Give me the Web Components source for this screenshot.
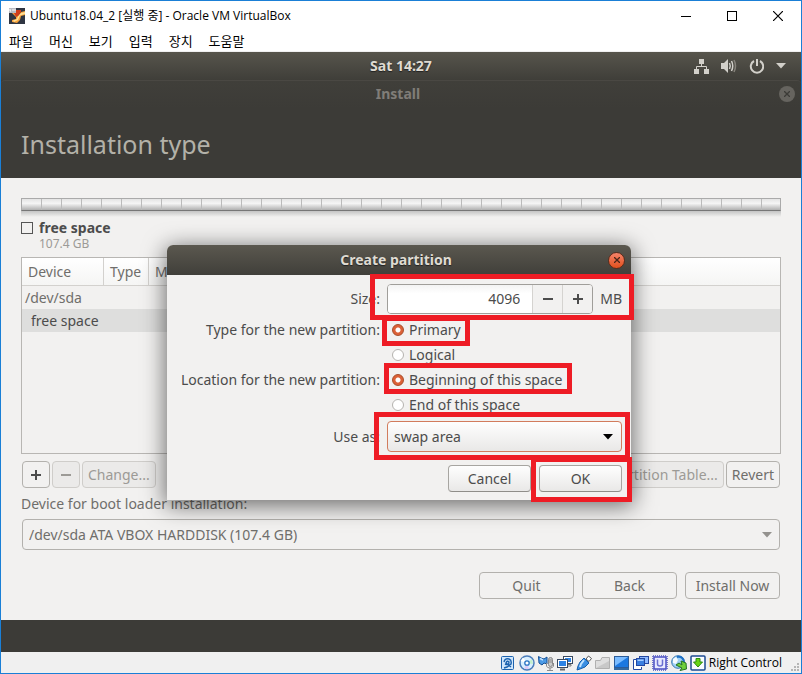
<!DOCTYPE html>
<html lang="en">
<head>
<meta charset="utf-8">
<title>Ubuntu18.04_2 - Oracle VM VirtualBox</title>
<style>
html, body { margin: 0; height: 100%; }
body { font: 14px/20px "Noto Sans", "Open Sans", sans-serif; color: #4c4c4c; }
</style>
</head>
<body>
<vm-window>
  <title-bar slot="title">Ubuntu18.04_2 [실행 중] - Oracle VM VirtualBox</title-bar>
  <menu-bar slot="menu"></menu-bar>
  <guest-screen>
    <top-panel></top-panel>
    <installer-page></installer-page>
    <partition-dialog></partition-dialog>
  </guest-screen>
  <status-bar slot="status">Right Control</status-bar>
</vm-window>

<script>
const define = (name, html) => {
  const t = document.createElement('template');
  t.innerHTML = html;
  customElements.define(name, class extends HTMLElement {
    constructor() {
      super();
      this.attachShadow({ mode: 'open' }).append(t.content.cloneNode(true));
    }
  });
};

define('vm-window', `<style>
:host { display: flex; flex-direction: column; min-height: 100vh; box-sizing: border-box; border: 1px solid #1a7fd6; background: #fff; }
main { flex: 1; display: flex; flex-direction: column; }
</style>
<slot name="title"></slot><slot name="menu"></slot><main><slot></slot></main><slot name="status"></slot>`);

define('title-bar', `<style>
:host { display: flex; align-items: center; height: 29px; padding: 0 0 1px 8px; color: #000; font: 12px/16px "Open Sans", "Noto Sans CJK KR", sans-serif; }
.t { flex: 1; padding-left: 5px; }
button { width: 46px; height: 28px; padding: 0; border: 0; background: none; display: grid; place-items: center; }
</style>
<svg width="16" height="16" viewBox="0 0 16 16"><rect width="16" height="16" fill="#2f3542"/><path d="M3 5H7L9 8L12 4L16 3V7L12 8L11 12L8 15L3 14L3 12L7 11L7 9Z" fill="#f7a23b"/><path d="M9 8L12 5L16 4V6L11 7.500L9 12L5 14L4 12.500L8 11Z" fill="#ffdf95"/><path d="M7 2H12L12 4L9 8L7 9L5 5Z" fill="#cf3d1c"/><rect width="7" height="5" fill="#b9bcc4"/><path d="M1 1V3H2M4 1V3M6 1V3" stroke="#fff" fill="none"/></svg>
<span class="t"><slot></slot></span>
<button aria-label="Minimize"><svg width="10" height="10"><path d="M0 5.500H10" stroke="#000"/></svg></button>
<button aria-label="Maximize"><svg width="10" height="10"><rect x=".5" y=".5" width="9" height="9" fill="none" stroke="#000"/></svg></button>
<button aria-label="Close"><svg width="10" height="10"><path d="M0 0L10 10M10 0L0 10" stroke="#000" stroke-width="1.2"/></svg></button>`);

define('menu-bar', `<style>
:host { display: flex; height: 21px; box-sizing: border-box; border-bottom: 1px solid #f0f0f0; padding-left: 8px; gap: 16px; }
button { border: 0; padding: 0; background: none; color: #000; font: 13px/18px "Noto Sans CJK KR", sans-serif; }
</style>
<button>파일</button><button>머신</button><button>보기</button><button>입력</button><button>장치</button><button>도움말</button>`);

define('guest-screen', `<style>
:host { flex: 1; display: flex; flex-direction: column; position: relative; background: #3c3b37; }
</style><slot></slot>`);

define('top-panel', `<style>
:host { display: grid; grid-template-columns: 1fr auto 1fr; align-items: center; height: 27px; padding-bottom: 1px; background: linear-gradient(#57554c, #3f3e39); color: #dfdbd2; font-weight: 700; text-shadow: 0 1px 1px #222; }
.r { display: flex; justify-content: flex-end; align-items: center; gap: 12px; padding-right: 15px; }
</style>
<span></span><span>Sat 14:27</span>
<span class="r">
<svg width="15" height="16" fill="#d2d0ca"><path d="M5 1H10V6H5ZM0 11H5V16H0ZM10 11H15V16H10Z"/><path d="M7.500 6V8.500M2.500 11V8.500H12.500V11" fill="none" stroke="#d2d0ca"/></svg>
<svg width="16" height="16"><path d="M0 5H3L7 1V15L3 11H0Z" fill="#d2d0ca"/><path d="M8.500 5Q10 8 8.500 11M10.500 3Q13 8 10.500 13" fill="none" stroke="#d2d0ca" stroke-width="1.500"/><path d="M13 2Q16 8 13 14" fill="none" stroke="#85827b" stroke-width="1.500"/></svg>
<svg width="15" height="16" fill="none" stroke="#d2d0ca" stroke-width="2"><path d="M5 3A6.200 6.200 0 1 0 11 3M8 1V8"/></svg>
<svg width="10" height="6"><path d="M0 0H10L5 5.500Z" fill="#d2d0ca"/></svg>
</span>`);

define('tool-button', `<style>
:host { display: inline-flex; }
button { width: 100%; min-width: 28px; height: 27px; padding: 0 5px; font: inherit; line-height: 20px; color: #6f6e6b; border: 1px solid #b3b1ad; border-radius: 4px; background: #f2f1f0; white-space: nowrap; display: flex; align-items: center; justify-content: center; }
:host([off]) button { color: #9c9a96; border-color: #cfcdca; background: #ebeae9; }
:host([strong]) button { color: #4c4c4c; border-color: #a7a5a1; border-bottom-color: #8f8d89; background: linear-gradient(#fefefe, #e9e8e7); }
</style><button><slot></slot></button>`);

define('disk-bar', `<style>
:host { display: block; height: 21px; }
.b { height: 13px; box-sizing: border-box; border: 1px solid #aaa; border-bottom-color: #777; background: repeating-linear-gradient(90deg, transparent 0 19px, #bbb 19px 20px), linear-gradient(#e4e4e4, #f5f5f5 40%, #b0b0b0); }
.s { height: 6px; background: linear-gradient(#c4c4c4, #f2f1f0); }
</style><div class="b"></div><div class="s"></div>`);

define('installer-page', `<style>
:host { display: flex; flex-direction: column; }
.bar { display: grid; grid-template-columns: 1fr auto 1fr; align-items: center; height: 28px; box-sizing: border-box; border-top: 1px solid #4a4843; border-radius: 4px 4px 0 0; background: linear-gradient(#403f3a, #3c3b37); color: #807d78; font-weight: 700; padding: 0 6px 1px 0; }
.x { justify-self: end; width: 16px; height: 16px; padding: 0; border: 0; border-radius: 50%; background: #66645f; display: grid; place-items: center; }
h1 { margin: 0; height: 70px; line-height: 72px; padding-left: 20px; font-size: 25px; font-weight: 400; color: #b3b1a8; background: #3c3b37; }
.body { background: #f2f1f0; padding: 20px 20px 21px; color: #6f6e6b; }
.legend { display: grid; grid-template-columns: 12px 1fr; column-gap: 6px; line-height: 18px; }
.sw { align-self: center; width: 10px; height: 10px; border: 1px solid #555; }
.legend b { color: #4c4c4c; }
.legend small { grid-column: 2; font-size: 12px; line-height: 14px; color: #9c9a96; }
.list { margin-top: 6px; height: 197px; box-sizing: border-box; border: 1px solid #b8b6b3; }
table { width: 100%; border-collapse: separate; border-spacing: 0; table-layout: fixed; }
th { height: 27px; padding: 0 0 0 6px; text-align: left; font-weight: 400; background: linear-gradient(#fff, #f5f5f4); border-right: 1px solid #d3d1ce; border-bottom: 1px solid #d3d1ce; }
th:last-child { border-right: 0; }
td { height: 23px; padding: 0 0 0 3px; }
.sel td { background: #dededd; padding-left: 9px; color: #4c4c4c; }
.tools { display: flex; gap: 2px; padding: 7px 1px 6px; }
.push { margin-left: auto; }
select { display: block; appearance: none; width: calc(100% - 2px); height: 31px; margin: 5px 1px 22px; padding: 0 6px; font: inherit; color: #6f6e6b; border: 1px solid #b3b1ad; border-radius: 4px; background: #f2f1f0; grid-area: 1 / 1; }
.combo { display: grid; align-items: center; }
.combo svg { grid-area: 1 / 1; justify-self: end; margin: 0 9px 17px 0; pointer-events: none; }
.foot { display: flex; justify-content: flex-end; gap: 8px; padding-right: 1px; }
.foot tool-button { width: 95px; }
</style>
<div class="bar"><span></span><span>Install</span><button class="x" aria-label="Close"><svg width="6" height="6"><path d="M0 0L6 6M6 0L0 6" stroke="#3c3b37" stroke-width="1.300"/></svg></button></div>
<h1>Installation type</h1>
<div class="body">
<disk-bar></disk-bar>
<div class="legend"><span class="sw"></span><b>free space</b><small>107.4 GB</small></div>
<div class="list"><table><colgroup><col style="width:82px"><col style="width:45px"><col></colgroup>
<thead><tr><th>Device</th><th>Type</th><th>Mount point</th></tr></thead>
<tbody><tr><td>/dev/sda</td><td></td><td></td></tr><tr class="sel"><td>free space</td><td></td><td></td></tr></tbody></table></div>
<div class="tools"><tool-button aria-label="Add"><svg width="12" height="12"><path d="M6 1V11M1 6H11" stroke="#4c4c4c" stroke-width="2"/></svg></tool-button><tool-button off aria-label="Remove"><svg width="12" height="12"><path d="M1 6H11" stroke="#9c9a96" stroke-width="2"/></svg></tool-button><tool-button off>Change...</tool-button><tool-button off class="push">New Partition Table...</tool-button><tool-button>Revert</tool-button></div>
<label for="boot">Device for boot loader installation:</label>
<div class="combo"><select id="boot"><option>/dev/sda ATA VBOX HARDDISK (107.4 GB)</option></select><svg width="10" height="6"><path d="M0 0H10L5 5.500Z" fill="#94928e"/></svg></div>
<div class="foot"><tool-button>Quit</tool-button><tool-button>Back</tool-button><tool-button>Install Now</tool-button></div>
</div>`);

define('mark-box', `<style>
:host { position: absolute; box-sizing: border-box; border: 5px solid #ee1c25; pointer-events: none; }
</style>`);

define('partition-dialog', `<style>
:host { position: absolute; top: 193px; left: calc(50% - 234px); width: 464px; background: #f2f1f0; border-radius: 6px 6px 0 0; box-shadow: 0 4px 22px 2px rgba(0,0,0,.55); }
header { display: grid; grid-template-columns: 1fr auto 1fr; align-items: center; height: 30px; padding-right: 6px; box-sizing: border-box; border-radius: 6px 6px 0 0; background: linear-gradient(#5b584f, #403f3a); color: #dfdbd2; text-shadow: 0 1px 1px #222; }
h2 { margin: 0; font-size: 14px; }
.x { justify-self: end; width: 17px; height: 17px; padding: 0; border: 1px solid #5a2c1c; border-radius: 50%; background: linear-gradient(#f4836a, #e2501d); display: grid; place-items: center; }
form { display: grid; grid-template-columns: 213px minmax(0, 1fr); column-gap: 7px; padding: 9px 9px 8px 0; }
.l { text-align: right; line-height: 25px; }
.size { line-height: 30px; }
.use { line-height: 31px; }
.row { display: flex; align-items: center; gap: 7px; }
.spin { flex: 1; display: flex; height: 30px; box-sizing: border-box; border: 1px solid #a09e9a; border-radius: 4px; overflow: hidden; background: #fff; }
.spin input { flex: 1; min-width: 0; border: 0; padding: 0 12px; text-align: right; font: inherit; color: #4c4c4c; background: linear-gradient(#f3f3f3, #fff 30%); }
.spin button { width: 30px; padding: 0; border: 0; border-left: 1px solid #d5d3d0; background: #f2f1f0; display: grid; place-items: center; }
.radios { display: grid; grid-auto-rows: 25px; padding-left: 5px; }
.radios label { display: flex; align-items: center; gap: 5px; }
.radios input { appearance: none; margin: 0; width: 12px; height: 12px; border: 1px solid #b5b3af; border-radius: 50%; background: #fff; }
.radios input:checked { border-color: #a84d2a; background: radial-gradient(circle, #fff 0 2px, #dc6137 3px); }
.g { margin-top: 3px; }
.m { margin-top: 4px; }
.combo { display: grid; align-items: center; }
select { grid-area: 1 / 1; appearance: none; width: 100%; height: 31px; padding: 0 6px; font: inherit; color: #4c4c4c; border: 1px solid #d27c5d; border-radius: 4px; background: linear-gradient(#fefefe, #e9e8e7); }
.combo svg { grid-area: 1 / 1; justify-self: end; margin-right: 9px; pointer-events: none; }
.acts { grid-column: 1 / 3; display: flex; justify-content: flex-end; gap: 8px; margin-top: 13px; }
.acts tool-button { width: 83px; }
.m1 { left: 203px; top: 29px; width: 264px; height: 46px; }
.m2 { left: 215px; top: 71px; width: 88px; height: 30px; }
.m3 { left: 217px; top: 118px; width: 188px; height: 31px; }
.m4 { left: 207px; top: 167px; width: 256px; height: 48px; }
.m5 { left: 364px; top: 212px; width: 101px; height: 45px; }
</style>
<header><span></span><h2>Create partition</h2><button class="x" aria-label="Close"><svg width="6" height="6"><path d="M0 0L6 6M6 0L0 6" stroke="#4a2518" stroke-width="1.300"/></svg></button></header>
<form>
<label class="l size" for="size">Size:</label>
<div class="row"><div class="spin"><input id="size" type="text" value="4096"><button type="button" aria-label="Decrease"><svg width="12" height="12"><path d="M1 6H11" stroke="#4c4c4c" stroke-width="2"/></svg></button><button type="button" aria-label="Increase"><svg width="12" height="12"><path d="M6 1V11M1 6H11" stroke="#4c4c4c" stroke-width="2"/></svg></button></div><span>MB</span></div>
<span class="l g" id="kind">Type for the new partition:</span>
<div class="radios g" role="radiogroup" aria-labelledby="kind"><label><input type="radio" name="kind" checked>Primary</label><label><input type="radio" name="kind">Logical</label></div>
<span class="l" id="place">Location for the new partition:</span>
<div class="radios" role="radiogroup" aria-labelledby="place"><label><input type="radio" name="place" checked>Beginning of this space</label><label><input type="radio" name="place">End of this space</label></div>
<label class="l use m" for="use">Use as:</label>
<div class="combo m"><select id="use"><option>swap area</option></select><svg width="10" height="6"><path d="M0 0H10L5 5.500Z" fill="#000"/></svg></div>
<div class="acts"><tool-button strong>Cancel</tool-button><tool-button strong>OK</tool-button></div>
</form>
<mark-box class="m1"></mark-box><mark-box class="m2"></mark-box><mark-box class="m3"></mark-box><mark-box class="m4"></mark-box><mark-box class="m5"></mark-box>`);

define('status-bar', `<style>
:host { display: flex; justify-content: flex-end; align-items: center; gap: 3px; height: 21px; background: #f0f0f0; color: #000; font: 12px/16px "Open Sans", sans-serif; }
.t { padding-right: 6px; }
.grip { align-self: flex-end; margin: 0 1px 1px 0; }
</style>
<svg width="16" height="16"><rect x="1.500" y="1.500" width="12" height="13" rx="1" fill="#cfe6fb" stroke="#1b62ae"/><path d="M4 7Q5 3 9 4Q12 5 11 9L7 12L4 13M5 9Q9 11 9 7Q7 5 6 8L11 12" fill="none" stroke="#1b62ae" stroke-width="1.400"/></svg>
<svg width="16" height="16"><circle cx="8" cy="8" r="7" fill="#d9efff" stroke="#4a7dbb" stroke-width="1.500"/><path d="M8 8L4 2.500L1.500 6Z" fill="#fff"/><path d="M8 8L13 4L14 9Z" fill="#c2f0cc"/><path d="M8 8L5 14L10 14Z" fill="#dccbf6"/><circle cx="8" cy="8" r="2.200" fill="#fff" stroke="#2872c4" stroke-width="1.300"/></svg>
<svg width="16" height="16"><path d="M.5 1.500L3 3L6 4L9 2V9L6 8L4 10L1 8Z" fill="#4b9ae6" stroke="#124f95"/><path d="M2 3.500L5 5" stroke="#c4e4ff" stroke-width="1.500"/><rect x="10.500" y="2.500" width="4" height="9" rx="2" fill="#ccc" stroke="#8a8a8a"/><path d="M8.500 8V11Q9 13 12 13Q15 13 15.500 11V8M12 13V15M9 15.500H15M11 5H14M11 7H14" fill="none" stroke="#8a8a8a"/></svg>
<svg width="16" height="16"><rect x="6.500" y="1.500" width="9" height="7" fill="#2c83e5" stroke="#3a4a60"/><rect x="7.500" y="2.500" width="7" height="5" fill="none" stroke="#fff"/><path d="M10 9.500H14V11H10" stroke="#777" fill="none"/><rect x=".5" y="4.500" width="10" height="8" fill="#fff" stroke="#3a4a60"/><rect x="2" y="6" width="7" height="5" fill="#2c83e5"/><path d="M3 14.500H8" stroke="#666" stroke-width="2"/></svg>
<svg width="16" height="16"><path d="M10 4L12.500 1L15.500 3.500L13 6.500Z" fill="#fff" stroke="#555"/><path d="M8 3L13 8L9 12L4 14L1 15L2 11L4 7Z" fill="#3b8fe2" stroke="#165ca9"/><path d="M8 5L5 9L4 12" stroke="#c3e4ff" stroke-width="2" fill="none"/></svg>
<svg width="16" height="16"><path d="M.5 13.500V5.500L5.500 5.500L7 2.500H14.500V13.500Z" fill="#dedede" stroke="#b0b0b0"/><path d="M1 13L14 6V13Z" fill="#c8c8c8"/></svg>
<svg width="16" height="16"><rect x=".5" y="1.500" width="14" height="11" fill="#1c78e0" stroke="#2b5c99"/><path d="M1 2H14L1 11Z" fill="#7bbcff"/><path d="M0 14H15" stroke="#35699f" stroke-width="2"/></svg>
<svg width="16" height="16"><rect x="6.500" y="1.500" width="9" height="7" fill="#8db9ff" stroke="#2448a1"/><path d="M4 4.500H.5V14.500H8.500V12" fill="#fff" stroke="#2448a1"/><rect x="3.500" y="3.500" width="8" height="7" fill="#3a7fe0" stroke="#2448a1"/><path d="M4.500 4.500H10.500V6H4.500Z" fill="#a3cdff"/></svg>
<svg width="16" height="16"><rect x="2" y="2" width="12" height="12" fill="#e8eaff" stroke="#4a4fc4" stroke-width="1.500"/><path d="M1 .8H15M1 15.200H15M.8 1V15M15.200 1V15" stroke="#3e43ba" stroke-dasharray="1 1"/><path d="M5.500 4.500V9Q5.500 11 8 11Q10.500 11 10.500 9V4.500" fill="none" stroke="#6a70d0" stroke-width="1.500"/></svg>
<svg width="16" height="16"><circle cx="7" cy="7" r="6.300" fill="#9fd0f5" stroke="#3775af"/><path d="M2 4L5 2L7 5L5 9L2 8Z" fill="#f4fbff"/><path d="M6 2Q12 1 13 7" fill="none" stroke="#1f71c6" stroke-width="2"/><path d="M5 10L8 8L11 10L10 6L15 8L15.500 14L9 15.500L11 13Z" fill="#6fcf3b" stroke="#257423"/></svg>
<svg width="16" height="16"><rect x="1" y="1" width="14" height="14" rx="1" fill="#f9fcff" stroke="#1c4a91" stroke-width="1.500"/><path d="M6 3.500H10V7H12.500L8 12L3.500 7H6Z" fill="#69d416" stroke="#2d8c10"/></svg>
<span class="t"><slot></slot></span>
<svg class="grip" width="9" height="9" fill="#b5b5b5"><path d="M6 0H8V2H6ZM3 3H5V5H3ZM6 3H8V5H6ZM0 6H2V8H0ZM3 6H5V8H3ZM6 6H8V8H6Z"/></svg>`);
</script>
</body>
</html>
